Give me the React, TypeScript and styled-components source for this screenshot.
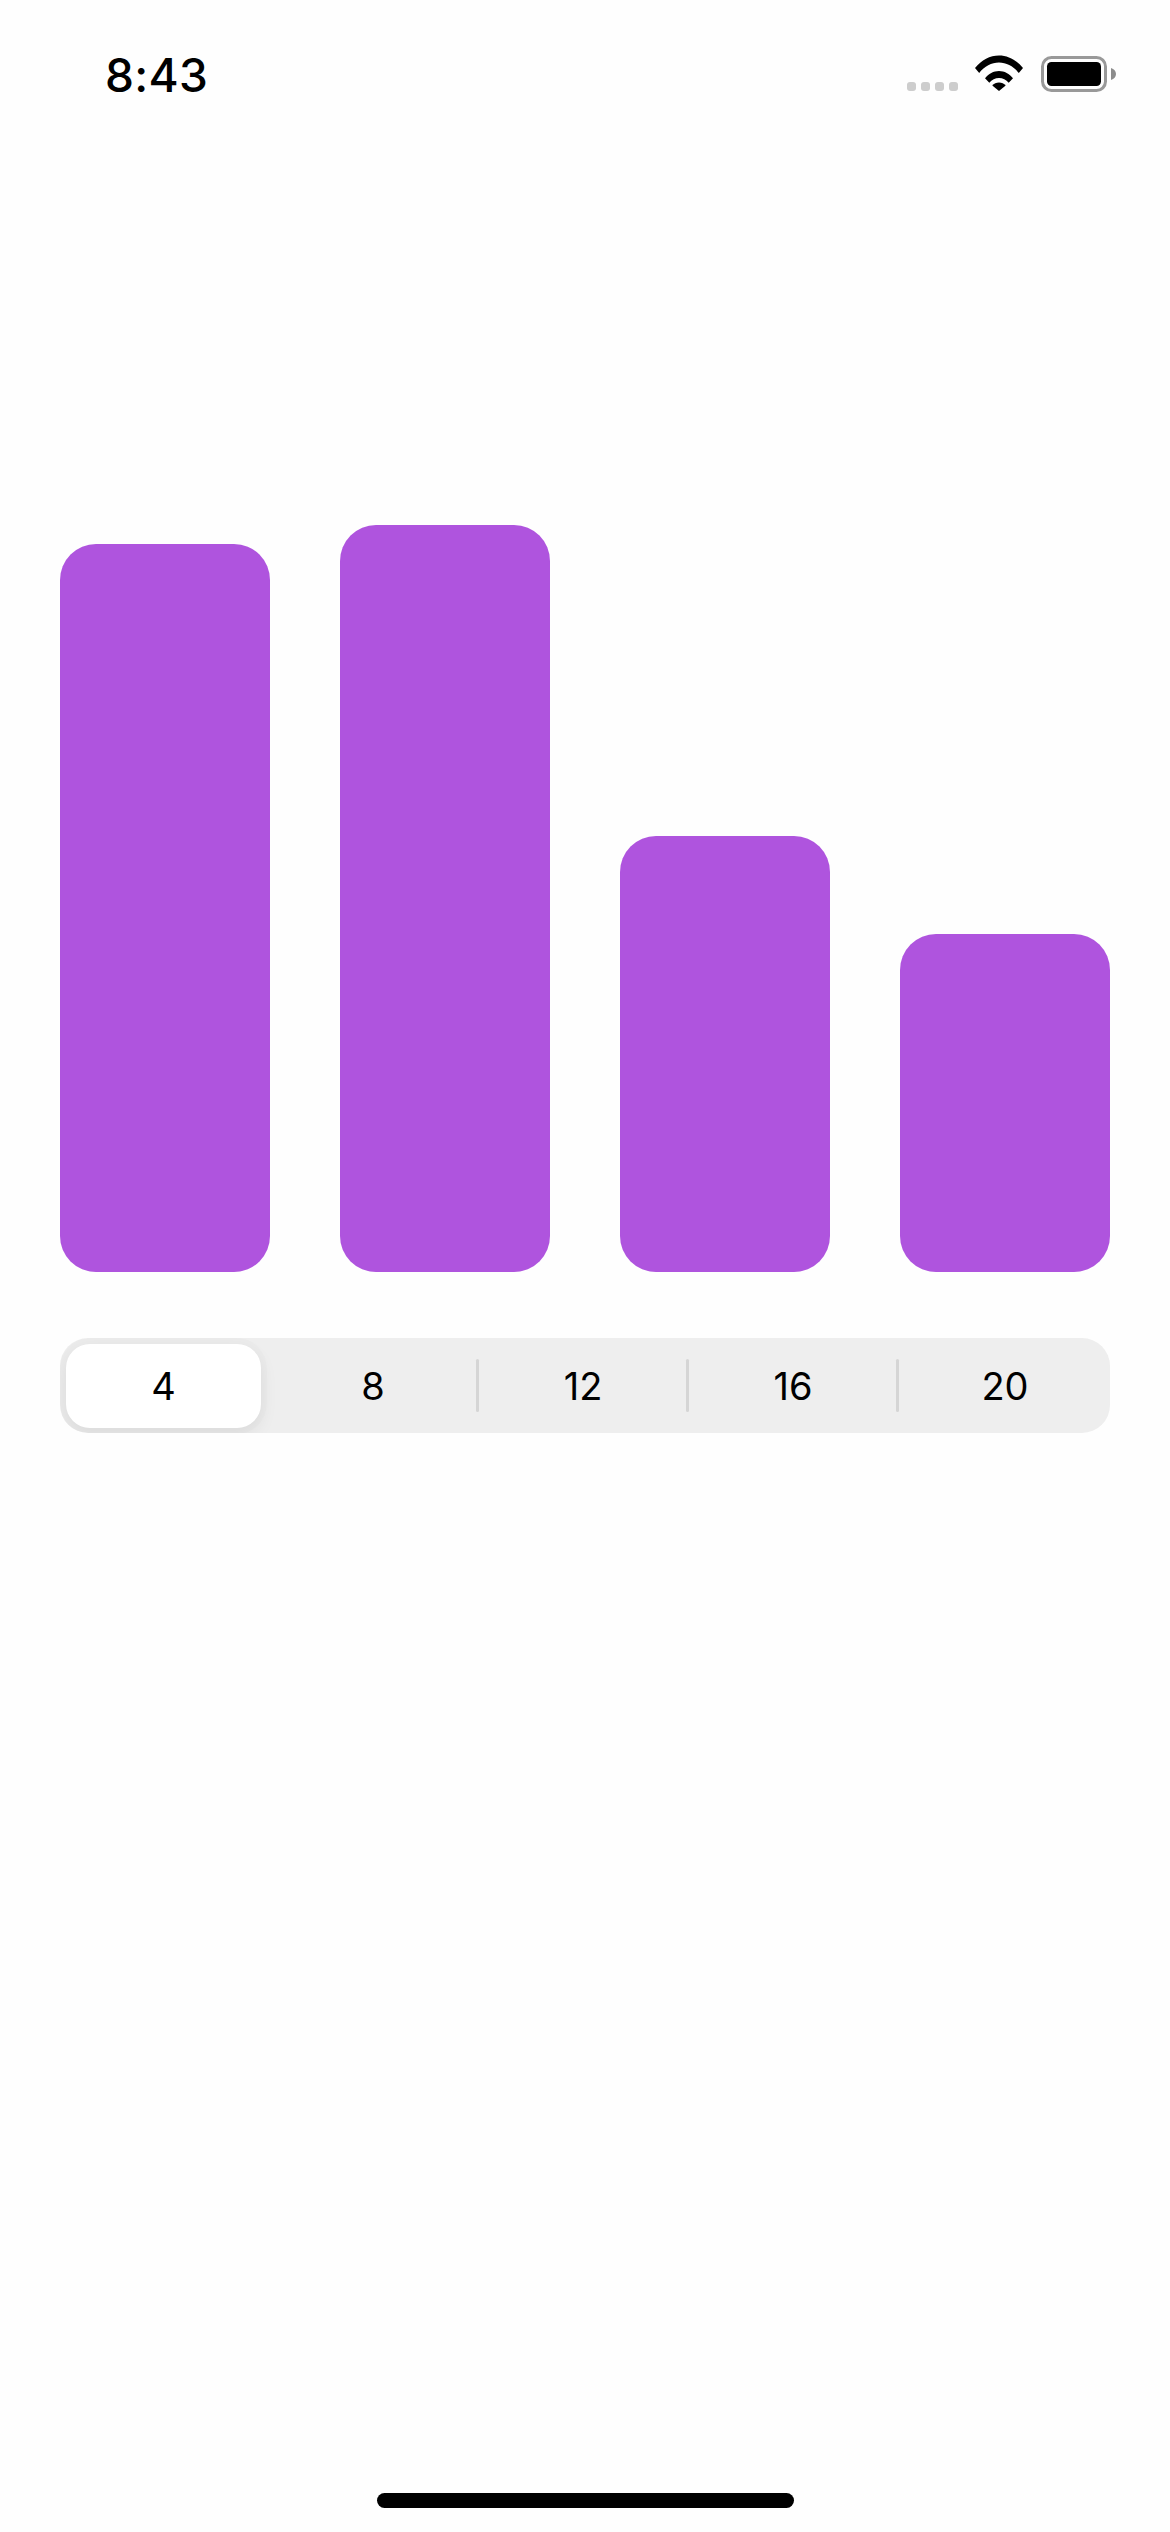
import React from "react";
import styled, { createGlobalStyle } from "styled-components";

const Global = createGlobalStyle`
  html, body { margin: 0; padding: 0; background: #fefefe; }
  * { box-sizing: border-box; }
`;

const Screen = styled.div`
  width: 1170px;
  height: 2532px;
  display: flex;
  flex-direction: column;
  background: #fefefe;
  font-family: Inter, "Liberation Sans", sans-serif;
  color: #000;
`;

const StatusBar = styled.header`
  height: 148px;
  display: flex;
  align-items: flex-start;
  padding: 47px 54px 0 105px;
`;

const Time = styled.div`
  font-size: 46px;
  font-weight: 550;
  line-height: 56px;
  letter-spacing: 0.3px;
`;

const StatusIcons = styled.div`
  margin-left: auto;
  display: flex;
  align-items: flex-start;
  padding-top: 8px;
`;

const SignalDots = styled.div`
  display: flex;
  gap: 5px;
  margin-top: 27px;
  margin-right: 17px;
`;

const Dot = styled.span`
  width: 9px;
  height: 9px;
  border-radius: 3px;
  background: #cdcdcd;
`;

const WifiIcon = styled.svg`
  width: 48px;
  height: 36px;
  margin-right: 18px;
  display: block;
`;

const BatteryIcon = styled.svg`
  width: 75px;
  height: 36px;
  margin-top: 1px;
  display: block;
`;

const Chart = styled.section`
  height: 747px;
  margin-top: 377px;
  padding: 0 60px;
  display: flex;
  align-items: flex-end;
  justify-content: space-between;
`;

const Bar = styled.div<{ $height: number }>`
  width: 210px;
  height: ${(p) => p.$height}px;
  border-radius: 36px;
  background: #af54de;
`;

const Segmented = styled.div`
  width: 1050px;
  height: 95px;
  margin: 66px 60px 0;
  display: grid;
  grid-template-columns: repeat(5, 210px);
  border-radius: 28px;
  background: #eeeeee;
  overflow: hidden;
`;

const Segment = styled.div<{ $selected?: boolean; $divider?: boolean }>`
  position: relative;
  display: flex;
  align-items: center;
  justify-content: center;
  font-size: 38px;
  line-height: 46px;
  font-weight: 430;
  padding-right: ${(p) => (p.$divider ? "4px" : "0")};
  ${(p) =>
    p.$selected &&
    `
    margin: 6px 9px 5px 6px;
    border-radius: 24px;
    background: #ffffff;
    box-shadow: 0 7px 18px rgba(0, 0, 0, 0.07), 0 0 0 6px rgba(0, 0, 0, 0.012);
  `}
  ${(p) =>
    p.$divider &&
    `
    &::after {
      content: "";
      position: absolute;
      right: 1px;
      top: 21px;
      bottom: 21px;
      width: 3px;
      border-radius: 2px;
      background: #d5d5d5;
    }
  `}
`;

const HomeIndicator = styled.div`
  width: 417px;
  height: 15px;
  margin: auto auto 24px;
  border-radius: 8px;
  background: #000;
`;

const bars = [728, 747, 436, 338];
const segments = [4, 8, 12, 16, 20];

export default function App() {
  return (
    <Screen>
      <Global />
      <StatusBar>
        <Time>8:43</Time>
        <StatusIcons>
          <SignalDots>
            <Dot />
            <Dot />
            <Dot />
            <Dot />
          </SignalDots>
          <WifiIcon viewBox="0 0 48 36">
            <path d="M0 13C6.500 5 15 0.500 24 0.500S41.500 5 48 13l-4.200 5C38.500 11.400 31.500 7.600 24 7.600S9.500 11.400 4.200 18Z" fill="#000" />
            <path d="M10 23.300C13.600 18.800 18.600 16 24 16s10.400 2.800 14 7.300l-4.300 4.500C31.200 24.700 27.700 23 24 23s-7.200 1.700-9.700 4.800Z" fill="#000" />
            <path d="M17.300 30.500C18.900 28.700 21.300 27.500 24 27.500s5.100 1.200 6.700 3L24 36Z" fill="#000" />
          </WifiIcon>
          <BatteryIcon viewBox="0 0 75 36">
            <rect x="1.500" y="1.500" width="63" height="33" rx="9" fill="none" stroke="#999999" strokeWidth="3" />
            <rect x="6" y="6" width="54" height="24" rx="4.500" fill="#000" />
            <path d="M70 12c3 1 5 3.200 5 6s-2 5-5 6Z" fill="#8c8c8c" />
          </BatteryIcon>
        </StatusIcons>
      </StatusBar>
      <Chart>
        {bars.map((h, i) => (
          <Bar key={i} $height={h} />
        ))}
      </Chart>
      <Segmented>
        {segments.map((s, i) => (
          <Segment key={s} $selected={i === 0} $divider={i > 0 && i < 4}>
            {s}
          </Segment>
        ))}
      </Segmented>
      <HomeIndicator />
    </Screen>
  );
}
